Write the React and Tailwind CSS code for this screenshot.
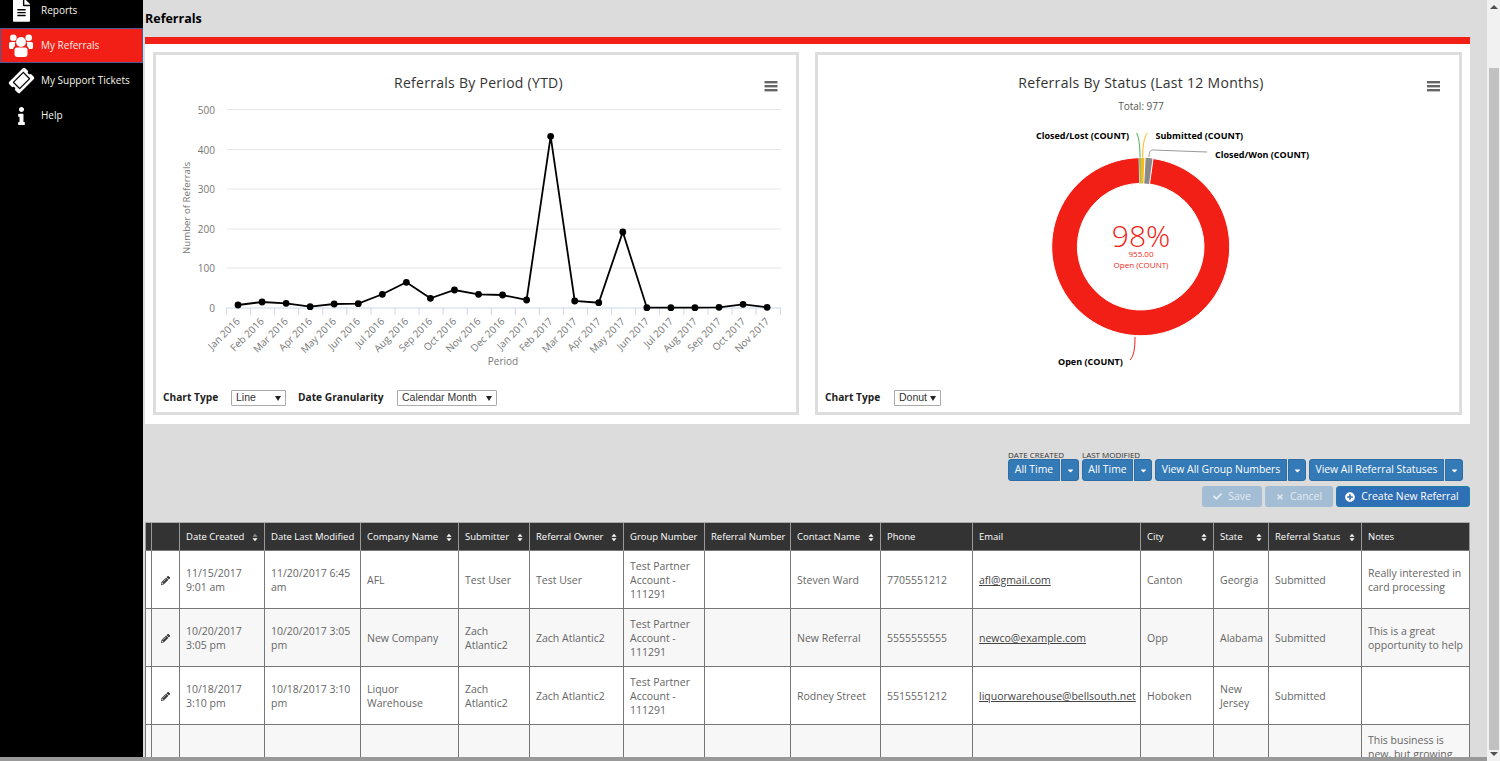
import { FaFileAlt, FaTicketAlt, FaInfo, FaPencilAlt, FaCheck, FaTimes, FaPlusCircle, FaCaretDown } from 'react-icons/fa';

function UsersIcon({ className }) {
  return (
    <svg viewBox="0 0 24 23" fill="currentColor" className={className}>
      <circle cx="4.3" cy="3.8" r="3.3" />
      <circle cx="19.7" cy="3.8" r="3.3" />
      <path d="M0 9.5 Q0 8 1.5 8 L6.5 8 Q5.5 10 6 12 Q4.5 13 4 15 L1.5 15 Q0 15 0 13.5 Z" />
      <path d="M24 9.5 Q24 8 22.5 8 L17.5 8 Q18.5 10 18 12 Q19.5 13 20 15 L22.5 15 Q24 15 24 13.5 Z" />
      <circle cx="12" cy="8" r="4.9" />
      <path d="M5.5 16 Q5.5 13.5 8 13.5 L16 13.5 Q18.5 13.5 18.5 16 L18.5 20 Q18.5 23 15.5 23 L8.5 23 Q5.5 23 5.5 20 Z" />
    </svg>
  );
}

const navItems = [
  { label: 'Reports', icon: FaFileAlt, size: 'w-[17px] h-[23px]' },
  { label: 'My Referrals', icon: UsersIcon, size: 'w-[24px] h-[23px]', active: true },
  { label: 'My Support Tickets', icon: FaTicketAlt, size: 'w-[23px] h-[23px] -rotate-45' },
  { label: 'Help', icon: FaInfo, size: 'w-[15px] h-[18px]' },
];

const months = ['Jan 2016', 'Feb 2016', 'Mar 2016', 'Apr 2016', 'May 2016', 'Jun 2016', 'Jul 2016', 'Aug 2016', 'Sep 2016', 'Oct 2016', 'Nov 2016', 'Dec 2016', 'Jan 2017', 'Feb 2017', 'Mar 2017', 'Apr 2017', 'May 2017', 'Jun 2017', 'Jul 2017', 'Aug 2017', 'Sep 2017', 'Oct 2017', 'Nov 2017'];
const pointY = [305, 302, 303.3, 306.7, 304, 303.7, 294.3, 282.3, 298.3, 290, 294.3, 295, 300, 136.3, 301, 302.7, 232, 307.7, 307.7, 307.7, 307.3, 304.3, 307.3];
const gridLines = [[500, 109.5], [400, 149.5], [300, 189], [200, 229], [100, 268], [0, 308]];

const columns = [
  { w: 'w-[6px]' },
  { w: 'w-[28px]' },
  { w: 'w-[85px]', label: 'Date Created', sort: 'down' },
  { w: 'w-[96px]', label: 'Date Last Modified' },
  { w: 'w-[98px]', label: 'Company Name', sort: 'both' },
  { w: 'w-[71px]', label: 'Submitter', sort: 'both' },
  { w: 'w-[94px]', label: 'Referral Owner', sort: 'both' },
  { w: 'w-[81px]', label: 'Group Number' },
  { w: 'w-[86px]', label: 'Referral Number' },
  { w: 'w-[90px]', label: 'Contact Name', sort: 'both' },
  { w: 'w-[92px]', label: 'Phone' },
  { w: 'w-[168px]', label: 'Email' },
  { w: 'w-[73px]', label: 'City', sort: 'both' },
  { w: 'w-[55px]', label: 'State', sort: 'both' },
  { w: 'w-[93px]', label: 'Referral Status', sort: 'both' },
  { w: 'w-[108px]', label: 'Notes' },
];

const rows = [
  ['11/15/2017 9:01 am', '11/20/2017 6:45 am', 'AFL', 'Test User', 'Test User', 'Test Partner Account - 111291', '', 'Steven Ward', '7705551212', 'afl@gmail.com', 'Canton', 'Georgia', 'Submitted', 'Really interested in card processing'],
  ['10/20/2017 3:05 pm', '10/20/2017 3:05 pm', 'New Company', 'Zach Atlantic2', 'Zach Atlantic2', 'Test Partner Account - 111291', '', 'New Referral', '5555555555', 'newco@example.com', 'Opp', 'Alabama', 'Submitted', 'This is a great opportunity to help'],
  ['10/18/2017 3:10 pm', '10/18/2017 3:10 pm', 'Liquor Warehouse', 'Zach Atlantic2', 'Zach Atlantic2', 'Test Partner Account - 111291', '', 'Rodney Street', '5515551212', 'liquorwarehouse@bellsouth.net', 'Hoboken', 'New Jersey', 'Submitted', ''],
  ['', '', '', '', '', '', '', '', '', '', '', '', '', 'This business is new, but growing quickly'],
];

function arc(a0, a1, R = 89, r = 63.3, cx = 1140.7, cy = 246.7) {
  const p = (rad, a) => {
    const t = (a * Math.PI) / 180;
    return `${cx + rad * Math.sin(t)} ${cy - rad * Math.cos(t)}`;
  };
  const large = a1 - a0 > 180 ? 1 : 0;
  return `M${p(R, a0)} A${R} ${R} 0 ${large} 1 ${p(R, a1)} L${p(r, a1)} A${r} ${r} 0 ${large} 0 ${p(r, a0)} Z`;
}

function Hamburger({ x }) {
  return (
    <g className="fill-[#666]">
      <rect x={x} y="81" width="13" height="2.4" />
      <rect x={x} y="85" width="13" height="2.4" />
      <rect x={x} y="89" width="13" height="2.4" />
    </g>
  );
}

function LineChart() {
  const points = pointY.map((y, i) => [238 + 24.05 * i, y]);
  return (
    <svg viewBox="156 55 640 330" className="w-[640px] h-[330px] font-['Open_Sans',sans-serif]">
      <text x="478.5" y="88" textAnchor="middle" className="fill-[#333] text-[14px] tracking-[0.28px]">Referrals By Period (YTD)</text>
      <Hamburger x={764.5} />
      {gridLines.map(([v, y]) => (
        <g key={v}>
          <line x1="227" x2="781" y1={y} y2={y} stroke={v === 0 ? '#ccd6eb' : '#e6e6e6'} />
          <text x="215" y={y + 4} textAnchor="end" className="fill-[#777] text-[10px]">{v}</text>
        </g>
      ))}
      <text transform="translate(190 208) rotate(-90)" textAnchor="middle" className="fill-[#777] text-[9.7px]">Number of Referrals</text>
      {months.map((m, i) => {
        const x = 226.5 + 24.07 * i;
        return (
          <g key={m}>
            <line x1={x} x2={x} y1="308" y2="315" stroke="#ccd6eb" />
            <text transform={`translate(${x + 14} 322) rotate(-45)`} textAnchor="end" className="fill-[#777] text-[10px]">{m}</text>
          </g>
        );
      })}
      <line x1="780.5" x2="780.5" y1="308" y2="315" stroke="#ccd6eb" />
      <text x="503" y="365" textAnchor="middle" className="fill-[#777] text-[10px]">Period</text>
      <polyline points={points.map(p => p.join(',')).join(' ')} fill="none" stroke="#000" strokeWidth="1.8" />
      {points.map(([x, y]) => <circle key={x} cx={x} cy={y} r="3.4" fill="#000" />)}
    </svg>
  );
}

function DonutChart() {
  return (
    <svg viewBox="818 55 641 330" className="w-[641px] h-[330px] font-['Open_Sans',sans-serif]">
      <text x="1141" y="88" textAnchor="middle" className="fill-[#333] text-[14px] tracking-[0.31px]">Referrals By Status (Last 12 Months)</text>
      <text x="1141" y="109.5" textAnchor="middle" className="fill-[#555] text-[10px]">Total: 977</text>
      <Hamburger x={1427} />
      <path d={arc(8, 359)} fill="#f21f16" stroke="#fff" strokeWidth="1" />
      <path d={arc(359.1, 360)} fill="#4caf50" />
      <path d={arc(0.2, 2.4)} fill="#fdb813" />
      <path d={arc(3.2, 7.6)} fill="#8a8a8a" />
      <path d="M1136.7 133 C1139 138 1140 146 1140 157" fill="none" stroke="#4caf50" />
      <path d="M1147.3 133 C1144 137 1142.7 146 1142.7 157" fill="none" stroke="#fdb813" />
      <path d="M1207 152 L1153 150 C1150 150 1149 153 1149 157" fill="none" stroke="#999" />
      <path d="M1135 337 C1135 348 1134 356 1130 360" fill="none" stroke="#f21f16" />
      <g className="fill-black text-[9px] font-bold">
        <text x="1036" y="138.5">Closed/Lost (COUNT)</text>
        <text x="1155.5" y="138.5">Submitted (COUNT)</text>
        <text x="1215" y="157.5">Closed/Won (COUNT)</text>
        <text x="1058" y="364.5">Open (COUNT)</text>
      </g>
      <text x="1141" y="246.5" textAnchor="middle" className="fill-[#f21f16] text-[30px] font-light">98%</text>
      <text x="1141" y="257" textAnchor="middle" className="fill-[#f21f16] text-[8px]">955.00</text>
      <text x="1141" y="267.5" textAnchor="middle" className="fill-[#f21f16] text-[8px]">Open (COUNT)</text>
    </svg>
  );
}

function FakeSelect({ value, width }) {
  return (
    <div className={`${width} h-[16px] flex items-center justify-between pl-[4px] pr-[4px] bg-white border border-[#aaa] rounded-[1px] text-[10.5px] font-normal text-[#333] font-['Liberation_Sans',sans-serif]`}>
      <span>{value}</span>
      <span className="w-0 h-0 border-x-[3px] border-x-transparent border-t-[5px] border-t-[#222]" />
    </div>
  );
}

function ChartPanel({ children, controls, width }) {
  return (
    <div className={`${width} h-[363px] border-[3px] border-[#ddd] flex flex-col`}>
      {children}
      <div className="flex items-center pl-[7px] pt-[5px] text-[10.2px] font-bold text-[#222]">{controls}</div>
    </div>
  );
}

function SplitButton({ label, width, caption }) {
  return (
    <div className="relative flex gap-[1px]">
      {caption && <span className="absolute -top-[9px] left-0 text-[8px] leading-[9px] text-[#333] whitespace-nowrap">{caption}</span>}
      <button className={`${width} h-[22px] bg-[#337ab7] border border-[#2e6da4] rounded-l-[3px] text-white text-[10.4px]`}>{label}</button>
      <button className="w-[18px] h-[22px] flex items-center justify-center bg-[#337ab7] border border-[#2e6da4] rounded-r-[3px] text-white">
        <FaCaretDown className="w-[9px] h-[9px]" />
      </button>
    </div>
  );
}

function SortIcon({ type }) {
  return (
    <svg viewBox="0 0 7 10" className="w-[6px] h-[9px] shrink-0">
      <path d="M0.5 4 L3.5 0.5 L6.5 4 Z" fill="#fff" opacity={type === 'down' ? 0.45 : 1} />
      <path d="M0.5 6 L3.5 9.5 L6.5 6 Z" fill="#fff" />
    </svg>
  );
}

function ReferralsTable() {
  return (
    <table className="w-[1324px] table-fixed border-collapse border border-[#333] text-[10.5px] leading-[14px]">
      <colgroup>
        {columns.map((c, i) => <col key={i} className={c.w} />)}
      </colgroup>
      <thead>
        <tr className="h-[27px] bg-[#333] text-white">
          {columns.map((c, i) => (
            <th key={i} className="border-x border-[#999] px-[6px] font-medium text-left text-[9.5px]">
              {c.label && (
                <div className="flex items-center justify-between whitespace-nowrap">
                  <span>{c.label}</span>
                  {c.sort && <SortIcon type={c.sort} />}
                </div>
              )}
            </th>
          ))}
        </tr>
      </thead>
      <tbody>
        {rows.map((row, r) => (
          <tr key={r} className={`h-[58px] text-[#666] ${r % 2 ? 'bg-[#f7f7f7]' : 'bg-white'}`}>
            <td className="border border-[#777]" />
            <td className="border border-[#777] text-center">
              {row[0] && <FaPencilAlt className="inline w-[9px] h-[9px] text-[#333]" />}
            </td>
            {row.map((cell, i) => (
              <td key={i} className="border border-[#777] px-[6px] align-middle">
                {i === 9 ? <span className="underline text-[#444]">{cell}</span> : cell}
              </td>
            ))}
          </tr>
        ))}
      </tbody>
    </table>
  );
}

export default function App() {
  return (
    <div className="w-[1500px] h-[761px] flex overflow-hidden font-['Open_Sans',sans-serif]">
      <div className="w-[1487px] flex flex-col">
        <div className="h-[757px] flex overflow-hidden">
          <aside className="w-[143px] shrink-0 bg-black -mt-[7px]">
            {navItems.map(item => (
              <div key={item.label} className={`h-[35px] flex items-center pl-[8px] text-[10px] border ${item.active ? 'bg-[#f21f16] border-[#4a5a9a] text-[#ffe9e6]' : 'border-black text-[#f5f5ee]'}`}>
                <div className="w-[24px] mr-[8px] flex justify-center text-white">
                  <item.icon className={item.size} />
                </div>
                {item.label}
              </div>
            ))}
          </aside>

          <main className="flex-1 min-w-0 bg-[#dcdcdc] pl-[2px] pr-[17px]">
            <div className="h-[37px] flex items-center pt-[1px] text-[12.5px] font-bold text-black">Referrals</div>
            <div className="h-[7px] bg-[#f21f16]" />
            <div className="h-[380px] bg-white flex gap-[16px] pt-[8px] pl-[8px]">
              <ChartPanel
                width="w-[646px]"
                controls={
                  <>
                    <span className="w-[68px]">Chart Type</span>
                    <FakeSelect value="Line" width="w-[55px]" />
                    <span className="ml-[12px] w-[99px]">Date Granularity</span>
                    <FakeSelect value="Calendar Month" width="w-[100px]" />
                  </>
                }
              >
                <LineChart />
              </ChartPanel>
              <ChartPanel
                width="w-[647px]"
                controls={
                  <>
                    <span className="w-[69px]">Chart Type</span>
                    <FakeSelect value="Donut" width="w-[47px]" />
                  </>
                }
              >
                <DonutChart />
              </ChartPanel>
            </div>

            <div className="flex flex-col items-end mt-[35px]">
              <div className="flex gap-[3px] pr-[7px]">
                <SplitButton label="All Time" width="w-[52px]" caption="DATE CREATED" />
                <SplitButton label="All Time" width="w-[51px]" caption="LAST MODIFIED" />
                <SplitButton label="View All Group Numbers" width="w-[132px]" />
                <SplitButton label="View All Referral Statuses" width="w-[135px]" />
              </div>
              <div className="flex gap-[3px] mt-[5px] text-[10.4px] text-white">
                <button className="w-[60px] h-[21px] flex items-center justify-center gap-[6px] bg-[#a3bdd4] rounded-[3px] text-[#e3ebf2]">
                  <FaCheck className="w-[9px] h-[9px]" /> Save
                </button>
                <button className="w-[68px] h-[21px] flex items-center justify-center gap-[6px] bg-[#a3bdd4] rounded-[3px] text-[#e3ebf2]">
                  <FaTimes className="w-[8px] h-[8px]" /> Cancel
                </button>
                <button className="w-[134px] h-[21px] flex items-center justify-center gap-[6px] pr-[2px] bg-[#2f6fb5] border border-[#1f7fa8] rounded-[3px]">
                  <FaPlusCircle className="w-[10px] h-[10px]" /> Create New Referral
                </button>
              </div>
            </div>

            <div className="mt-[15px] border-t border-[#aaa]">
              <ReferralsTable />
            </div>
          </main>
        </div>
        <div className="h-[4px] bg-[#999]" />
      </div>

      <div className="w-[13px] bg-[#f1f1f1] flex flex-col items-center pt-[5px] pb-[5px]">
        <span className="w-0 h-0 border-x-[4px] border-x-transparent border-b-[4px] border-b-[#505050]" />
        <div className="w-[10px] h-[682px] bg-[#c1c1c1] mt-[59px] mb-auto" />
        <span className="w-0 h-0 border-x-[4px] border-x-transparent border-t-[4px] border-t-[#505050]" />
      </div>
    </div>
  );
}
